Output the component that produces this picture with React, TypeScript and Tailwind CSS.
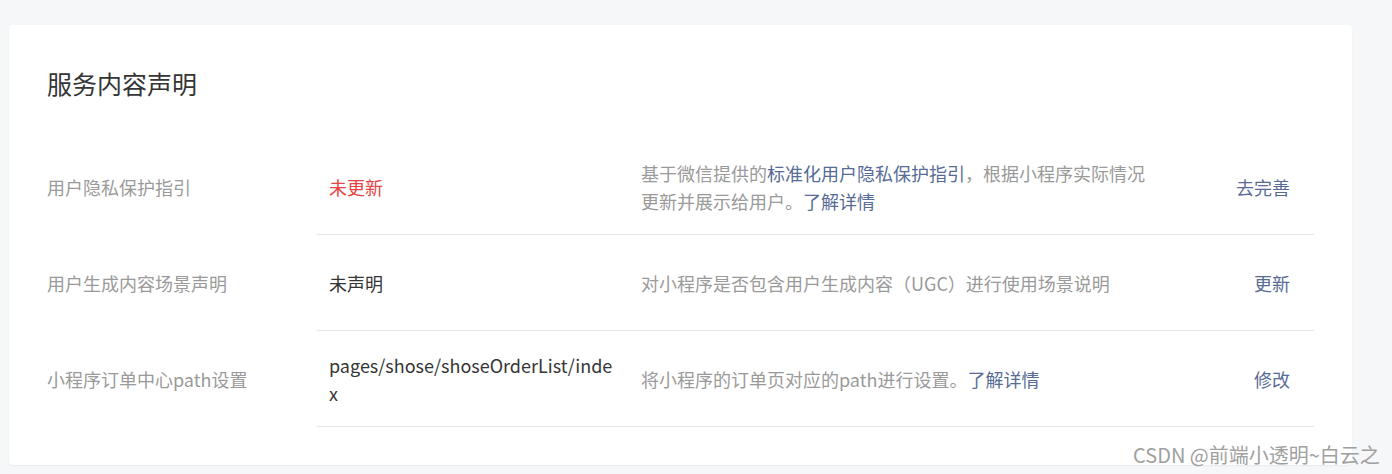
import React from "react";

const rows = [
  {
    label: "用户隐私保护指引",
    status: <span className="text-[#e54545]">未更新</span>,
    desc: (
      <>
        基于微信提供的<span className="text-[#576b95]">标准化用户隐私保护指引</span>，根据小程序实际情况更新并展示给用户。
        <span className="text-[#576b95]">了解详情</span>
      </>
    ),
    action: "去完善",
  },
  {
    label: "用户生成内容场景声明",
    status: <span className="text-[#353535]">未声明</span>,
    desc: <>对小程序是否包含用户生成内容（UGC）进行使用场景说明</>,
    action: "更新",
  },
  {
    label: "小程序订单中心path设置",
    status: <span className="text-[#353535] break-all">pages/shose/shoseOrderList/index</span>,
    desc: (
      <>
        将小程序的订单页对应的path进行设置。<span className="text-[#576b95]">了解详情</span>
      </>
    ),
    action: "修改",
  },
];

export default function App() {
  return (
    <div
      className="relative w-[1392px] h-[474px] bg-[#f6f7f9] pt-[25px] pl-[9px] overflow-hidden"
      style={{ fontFamily: '"Noto Sans CJK SC", "Noto Sans", sans-serif' }}
    >
      <div className="w-[1343px] h-[440px] bg-white rounded-[4px] shadow-[0_1px_2px_rgba(0,0,0,0.06)] px-[38px] pt-[38px]">
        <h2 className="text-[25px] leading-[40px] text-[#353535] font-normal mb-[36px]">服务内容声明</h2>
        <div>
          {rows.map((r, i) => (
            <div key={i} className="flex items-stretch h-[96px] text-[18px] leading-[28px]">
              <div className="w-[270px] shrink-0 flex items-center text-[#9a9a9a]">{r.label}</div>
              <div className="flex-1 flex border-b border-[#e7e7eb]">
                <div className="w-[312px] shrink-0 px-[12px] flex items-center">
                  <div className="w-full">{r.status}</div>
                </div>
                <div className="w-[530px] shrink-0 px-[12px] flex items-center text-[#9a9a9a]">
                  <div>{r.desc}</div>
                </div>
                <div className="flex-1 pr-[24px] flex items-center justify-end text-[#576b95]">{r.action}</div>
              </div>
            </div>
          ))}
        </div>
      </div>
      <div className="absolute left-[1133px] top-[442px] text-[20px] leading-[26px] text-[#a0a0a0] whitespace-nowrap">
        CSDN @前端小透明~白云之
      </div>
    </div>
  );
}
